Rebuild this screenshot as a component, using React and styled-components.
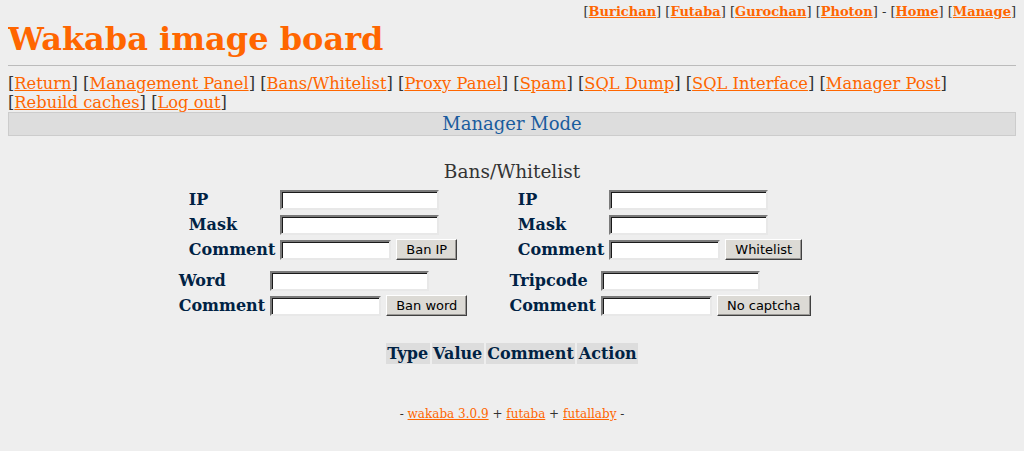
import React from "react";
import styled, { createGlobalStyle } from "styled-components";

const Global = createGlobalStyle`
  html, body { margin: 0; padding: 0; background: #eeeeee; }
  body {
    margin: 0 8px;
    color: #333333;
    font-family: "DejaVu Serif", serif;
    font-size: 16px;
  }
  a { color: #ff6600; }
`;

const AdminBar = styled.div`
  display: flex;
  justify-content: flex-end;
  padding-top: 4px;
  font-size: 13px;
  line-height: 16px;
  a { font-weight: bold; }
`;

const Logo = styled.div`
  color: #ff6600;
  font-size: 32px;
  font-weight: bold;
  line-height: 38px;
`;

const Rule = styled.hr`
  border: 0;
  border-top: 1px solid #bbbbbb;
  margin: 7px 0 8px;
  height: 0;
`;

const NavLinks = styled.div`
  line-height: 19px;
  font-size: 16.3px;
`;

const THeader = styled.div`
  background: #dddddd;
  border: 1px solid #cccccc;
  color: #1a5c9e;
  text-align: center;
  line-height: 22px;
  font-size: 18px;
`;

const SectionTitle = styled.div`
  text-align: center;
  margin-top: 25px;
  line-height: 22px;
  font-size: 18.5px;
`;

const FormGrid = styled.div`
  display: grid;
  grid-template-columns: 290px 300px;
  column-gap: 42px;
  row-gap: 6px;
  margin-left: 168px;
  margin-top: 4px;
`;

const Cell = styled.div`
  display: flex;
  justify-content: center;
  align-items: flex-end;
`;

const Block = styled.form`
  display: grid;
  grid-template-columns: auto auto;
  grid-auto-rows: 25px;
  align-items: center;
  margin: 0;
`;

const Label = styled.div`
  color: #002244;
  font-weight: bold;
  padding: 0 5px 0 4px;
  font-size: 16px;
  white-space: nowrap;
`;

const Field = styled.div`
  display: flex;
  align-items: center;
  gap: 5px;
  white-space: nowrap;
`;

const Input = styled.input`
  box-sizing: border-box;
  width: ${(p) => p.$w}px;
  height: 20px;
  background: #fff;
  border: 2px solid;
  border-color: #7a7a7a #e8e8e8 #e8e8e8 #7a7a7a;
  box-shadow: inset 1px 1px 0 #1a1a1a;
  padding: 0;
  margin: 0;
  font-family: "DejaVu Sans", sans-serif;
  font-size: 13px;
`;

const Button = styled.button`
  box-sizing: border-box;
  height: 21px;
  background: #dcdad5;
  border: 1px solid;
  border-color: #ffffff #404040 #404040 #ffffff;
  box-shadow: inset -1px -1px 0 #9a9895;
  padding: 0 9px;
  margin: 0;
  font-family: "DejaVu Sans", sans-serif;
  font-size: 13px;
  color: #000;
  white-space: nowrap;
`;

const ResultTable = styled.table`
  margin: 23px auto 0;
  border-spacing: 2px;
  th {
    background: #dddddd;
    color: #002244;
    font-weight: bold;
    padding: 0 1.5px;
    line-height: 21px;
  }
`;

const Footer = styled.div`
  text-align: center;
  font-size: 12px;
  margin-top: 41px;
`;

const Bracket = ({ href = "#", children }) => (
  <>
    [<a href={href}>{children}</a>]
  </>
);

function FormBlock({ rows, button }) {
  return (
    <Block onSubmit={(e) => e.preventDefault()}>
      {rows.map((r, i) => {
        const last = i === rows.length - 1;
        return (
          <React.Fragment key={i}>
            <Label>{r}</Label>
            <Field>
              <Input $w={last ? 111 : 159} />
              {last && <Button>{button}</Button>}
            </Field>
          </React.Fragment>
        );
      })}
    </Block>
  );
}

export default function App() {
  return (
    <>
      <Global />
      <AdminBar>
        <span>
          <Bracket>Burichan</Bracket> <Bracket>Futaba</Bracket>{" "}
          <Bracket>Gurochan</Bracket> <Bracket>Photon</Bracket> -{" "}
          <Bracket>Home</Bracket> <Bracket>Manage</Bracket>
        </span>
      </AdminBar>
      <Logo>Wakaba image board</Logo>
      <Rule />
      <NavLinks>
        <Bracket>Return</Bracket> <Bracket>Management Panel</Bracket>{" "}
        <Bracket>Bans/Whitelist</Bracket> <Bracket>Proxy Panel</Bracket>{" "}
        <Bracket>Spam</Bracket> <Bracket>SQL Dump</Bracket>{" "}
        <Bracket>SQL Interface</Bracket> <Bracket>Manager Post</Bracket>{" "}
        <Bracket>Rebuild caches</Bracket> <Bracket>Log out</Bracket>
      </NavLinks>
      <THeader>Manager Mode</THeader>
      <SectionTitle>Bans/Whitelist</SectionTitle>
      <FormGrid>
        <Cell>
          <FormBlock rows={["IP", "Mask", "Comment"]} button="Ban IP" />
        </Cell>
        <Cell>
          <FormBlock rows={["IP", "Mask", "Comment"]} button="Whitelist" />
        </Cell>
        <Cell>
          <FormBlock rows={["Word", "Comment"]} button="Ban word" />
        </Cell>
        <Cell>
          <FormBlock rows={["Tripcode", "Comment"]} button="No captcha" />
        </Cell>
      </FormGrid>
      <ResultTable>
        <thead>
          <tr>
            <th>Type</th>
            <th>Value</th>
            <th>Comment</th>
            <th>Action</th>
          </tr>
        </thead>
      </ResultTable>
      <Footer>
        - <a href="#">wakaba 3.0.9</a> + <a href="#">futaba</a> +{" "}
        <a href="#">futallaby</a> -
      </Footer>
    </>
  );
}
